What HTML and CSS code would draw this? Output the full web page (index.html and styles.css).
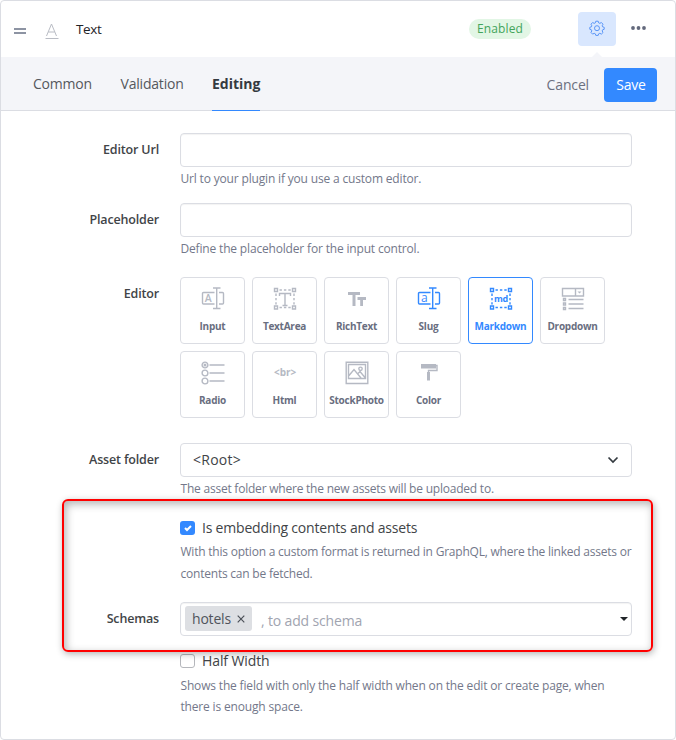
FILE: index.html
```html
<!DOCTYPE html>
<html lang="en">
<head>
<meta charset="utf-8">
<title>Field settings</title>
<link rel="stylesheet" href="styles.css">
</head>
<body>
<main class="card">
  <header class="header">
    <svg class="drag" width="12" height="6" viewBox="0 0 12 6"><path d="M0 1h12M0 5h12" stroke="#8d94a3" stroke-width="2"/></svg>
    <svg class="type" width="14" height="17" viewBox="0 0 14 17" fill="none" stroke="#b9bcc4"><path d="M1.500 13L6.500 1L11.500 13M3.300 9h6.400M.5 15.500h13"/></svg>
    <span class="title">Text</span>
    <span class="badge">Enabled</span>
    <button class="gear"><svg width="16" height="16" viewBox="0 0 16 16" fill="none" stroke="#5b96f7"><path d="M6.800 1.200h2.400l.5 1.700 1.100.5 1.600-.9 1.600 1.700-.8 1.600.4 1 1.600.5v2l-1.600.5-.4 1.100.8 1.600-1.600 1.600-1.600-.8-1.100.5-.5 1.600H6.800l-.5-1.600-1.100-.5-1.600.8L2 12.500l.8-1.600-.4-1.100L.8 9.300v-2l1.600-.5.4-1L2 4.200l1.600-1.700 1.600.9 1.100-.5z"/><circle cx="8" cy="8.200" r="2.500"/></svg></button>
    <svg class="dots" width="16" height="4" viewBox="0 0 16 4" fill="#63697c"><circle cx="2" cy="2" r="1.900"/><circle cx="7.500" cy="2" r="1.900"/><circle cx="13" cy="2" r="1.900"/></svg>
  </header>
  <nav class="tabs">
    <a class="tab common">Common</a>
    <a class="tab validation">Validation</a>
    <a class="tab active">Editing</a>
    <span class="cancel">Cancel</span>
    <button class="save">Save</button>
  </nav>
  <form class="form">
    <div class="row">
      <label class="label">Editor Url</label>
      <div><div class="input"></div><p class="hint">Url to your plugin if you use a custom editor.</p></div>
    </div>
    <div class="row">
      <label class="label">Placeholder</label>
      <div><div class="input"></div><p class="hint">Define the placeholder for the input control.</p></div>
    </div>
    <div class="row editors">
      <label class="label">Editor</label>
      <div class="tiles">
        <div class="tile"><svg class="icon" viewBox="0 0 24 24"><path d="M13.500 5.500H2.500q-1 0-1 1v9.500q0 1 1 1h11M18 5.500h3.500q1 0 1 1v9.500q0 1-1 1H18M15.700 1v20.500M12 1h7.500M12 21.500h7.500"/><text class="glyph" x="3.800" y="15" font-size="10.500">A</text></svg>Input</div>
        <div class="tile"><svg class="icon" viewBox="0 0 24 24"><path d="M1.500 1.500h3v3h-3zM19.500 1.500h3v3h-3zM1.500 19h3v3h-3zM19.500 19h3v3h-3zM6.500 9V6.500h11V9M12 6.500v12M9.500 18.500h5"/><path class="dash" d="M6.500 3h12M6.500 20.500h12M3 6.500v11M21 6.500v11"/></svg>TextArea</div>
        <div class="tile"><svg class="icon" viewBox="0 0 24 24"><path class="solid" d="M3 5h12v3h-4.500v11H7.500V8H3zM12.500 10H21v3h-3v6h-2.800v-6h-2.700z"/></svg>RichText</div>
        <div class="tile blue"><svg class="icon" viewBox="0 0 24 24"><path d="M13.500 5.500H2.500q-1 0-1 1v9.500q0 1 1 1h11M18 5.500h3.500q1 0 1 1v9.500q0 1-1 1H18M15.700 1v20.500M12 1h7.500M12 21.500h7.500"/><text class="glyph thin" x="4" y="15" font-size="12">a</text></svg>Slug</div>
        <div class="tile blue selected"><svg class="icon" viewBox="0 0 24 24"><path d="M1.500 1.500h3v3h-3zM19.500 1.500h3v3h-3zM1.500 19h3v3h-3zM19.500 19h3v3h-3z"/><path class="dash" d="M6.500 3h12M6.500 20.500h12M3 6.500v11M21 6.500v11"/><text class="glyph md" x="12" y="14.500" font-size="9">md</text></svg>Markdown</div>
        <div class="tile"><svg class="icon" viewBox="0 0 24 24"><path d="M1.500 1.500h21v7.500h-21zM14.500 1.500v7.500M7.500 12.500h15M7.500 17h15M7.500 21.500h15M2.500 11.500h2v2h-2zM2.500 16h2v2h-2zM2.500 20.500h2v2h-2z"/><path class="solid" d="M16.500 4.500h4l-2 2z"/></svg>Dropdown</div>
        <div class="tile"><svg class="icon" viewBox="0 0 24 24"><circle cx="4" cy="4" r="2.900"/><circle cx="4" cy="4" r=".8"/><circle cx="4" cy="12" r="2.900"/><circle cx="4" cy="20" r="2.900"/><path d="M8.500 4h15M8.500 12h15M8.500 20h15"/></svg>Radio</div>
        <div class="tile"><svg class="icon" viewBox="0 0 24 24"><text class="glyph md" x="12" y="15" font-size="10" textLength="22" lengthAdjust="spacing">&lt;br&gt;</text></svg>Html</div>
        <div class="tile"><svg class="icon" viewBox="0 0 24 24"><path d="M1.200 1.200h21.600v21.300H1.200zM3.500 3.500h17v14h-17zM4 14.500l5-6 7 8.500M13 12.500l2-2 5 6"/><circle cx="15.500" cy="7.800" r="1.700"/></svg>StockPhoto</div>
        <div class="tile"><svg class="icon" viewBox="0 0 24 24"><path class="solid" d="M4 3h15v4.500H4zM10 11h3v8.500h-3z"/><path d="M19 4.500h1v5h-8.500v2"/></svg>Color</div>
      </div>
    </div>
    <div class="row asset">
      <label class="label">Asset folder</label>
      <div><div class="input select"><span class="root">&lt;Root&gt;</span><svg width="12" height="8" viewBox="0 0 12 8" fill="none" stroke="#343a40" stroke-width="1.700"><path d="M1.500 1.500L6 6l4.500-4.500"/></svg></div><p class="hint tight">The asset folder where the new assets will be uploaded to.</p></div>
    </div>
    <div class="row embed">
      <div class="check"><span class="box checked"><svg width="15" height="14" viewBox="0 0 15 14" fill="none" stroke="#fff" stroke-width="2"><path d="M5 7l2 2 4-4"/></svg></span><span class="embed-name">Is embedding contents and assets</span></div>
      <p class="hint long tight">With this option a custom format is returned in GraphQL, where the linked assets or<br>contents can be fetched.</p>
    </div>
    <div class="row schemas">
      <label class="label">Schemas</label>
      <div class="input taginput"><span class="tag"><span class="hotels">hotels</span><svg width="8" height="8" viewBox="0 0 8 8" stroke="#4b5058" stroke-width="1.200"><path d="M.7.7l6.600 6.600M7.300.7L.7 7.300"/></svg></span><span class="ph">, to add schema</span><svg class="caret" width="8" height="4" viewBox="0 0 8 4"><path d="M0 0h8L4 4z" fill="#212529"/></svg></div>
    </div>
    <div class="row half">
      <div class="check"><span class="box"></span><span class="half-name">Half Width</span></div>
      <p class="hint long">Shows the field with only the half width when on the edit or create page, when<br>there is enough space.</p>
    </div>
  </form>
  <div class="highlight"></div>
</main>
</body>
</html>
```
FILE: styles.css
```css
* { box-sizing: border-box; }
body { margin: 0; background: #fff; color: #414447; font: 14px/20px "Open Sans", "Noto Sans", sans-serif; }
button { border: 0; padding: 0; font: inherit; }
p { margin: 0; }
span { white-space: nowrap; }
svg { flex: none; }
.card { position: relative; width: 676px; height: 740px; border: 1px solid #dbdde3; border-radius: 4px; }
.header { display: flex; align-items: center; height: 56px; padding: 0 29px 0 13px; }
.drag { margin-top: 4px; }
.type { margin: 4px 0 0 19px; }
.title { margin-left: 17px; color: #1f2328; font-size: 13.500px; letter-spacing: -.4px; }
.badge { margin-left: auto; width: 62px; height: 20px; border-radius: 10px; background: #e2f6e5; color: #43a45b; font-size: 12px; line-height: 20px; text-align: center; letter-spacing: .1px; }
.gear { position: relative; display: flex; align-items: center; justify-content: center; width: 38px; height: 34px; margin-left: 47px; border-radius: 4px; background: #d9e7fe; }
.gear svg { margin-top: -2px; }
.gear::after { content: ""; position: absolute; left: 14px; top: 40px; border: 5px solid transparent; border-top: 0; border-bottom-color: #f4f5f9; }
.dots { margin: -2px -1px 0 15px; }
.tabs { display: flex; height: 54px; padding: 0 18px 0 32px; background: #f4f5f9; border-bottom: 1px solid #dbdde3; }
.tab { height: 54px; line-height: 54px; color: #55585d; letter-spacing: -.2px; }
.common { width: 59px; margin-right: 28px; }
.validation { width: 64px; margin-right: 28px; padding-left: .5px; }
.active { width: 48px; color: #343a40; font-weight: 700; border-bottom: 1px solid #3389ff; letter-spacing: 0; }
.cancel { margin: 18px 15px 0 auto; color: #6c7080; letter-spacing: -.15px; }
.save { width: 53px; height: 34px; margin-top: 11px; padding-left: 1px; border-radius: 4px; background: #3389ff; color: #fff; letter-spacing: -.2px; }
.form { padding: 22px 43px 0 20px; }
.row { display: grid; grid-template-columns: 138px 452px; column-gap: 21px; height: 70px; }
.label { padding-top: 7px; text-align: right; font-size: 12.500px; font-weight: 600; white-space: nowrap; letter-spacing: -.16px; }
.input { display: flex; align-items: center; height: 34px; border: 1px solid #dbdde3; border-radius: 4px; box-shadow: inset 0 1px 1px #0000000d; }
.hint { padding: 2px 0 0 .5px; color: #73788a; font-size: 12px; line-height: 20px; white-space: nowrap; letter-spacing: -.17px; }
.tight { letter-spacing: -.22px; }
.editors { height: 170px; padding-top: 4px; }
.tiles { display: grid; grid-template-columns: repeat(6, 65px); grid-auto-rows: 67px; gap: 7px; align-content: start; }
.tile { display: flex; flex-direction: column; align-items: center; padding-top: 9px; border: 1px solid #dbdde3; border-radius: 4px; color: #696e80; font-size: 10px; font-weight: 700; line-height: 15px; letter-spacing: -.25px; white-space: nowrap; }
.icon { width: 24px; height: 24px; margin-bottom: 8px; fill: none; stroke: #b5b9c3; stroke-width: 1.400; }
.dash { stroke-dasharray: 2.400 2; }
.solid, .glyph { fill: #b5b9c3; stroke: none; }
.glyph { font-weight: 600; }
.thin { font-weight: 400; }
.md { text-anchor: middle; font-weight: 700; }
.blue .icon { stroke: #3389ff; }
.blue .glyph { fill: #3389ff; }
.selected { border-color: #3389ff; color: #3389ff; }
.select { justify-content: space-between; padding: 0 12px; box-shadow: none; }
.root { letter-spacing: .25px; }
.embed, .half { display: block; padding-left: 159px; }
.embed { height: 89px; padding-top: 5px; }
.check { display: flex; align-items: center; height: 20px; gap: 7px; }
.embed-name { letter-spacing: -.2px; }
.half-name { letter-spacing: -.1px; }
.box { width: 15px; height: 14px; border: 1px solid #b5b7bc; border-radius: 3px; }
.checked { display: flex; border: 0; background: #3389ff; }
.long { padding-top: 3px; line-height: 22px; }
.schemas { height: 46px; }
.taginput { padding: 0 3px 0 4px; }
.tag { display: flex; align-items: center; gap: 6px; width: 67px; height: 25px; margin-top: -1px; padding-left: 7px; border-radius: 3px; background: #dddfe3; color: #50545b; }
.hotels { width: 39px; letter-spacing: -.2px; }
.ph { margin: 3px 0 0 9px; color: #a1a4b0; letter-spacing: -.15px; }
.caret { margin-left: auto; }
.half { height: 75px; padding-top: 3px; }
.half .hint { padding-top: 4px; line-height: 21px; }
.highlight { position: absolute; left: 61px; top: 498px; width: 591px; height: 153px; border: 2px solid #f00; border-radius: 6px; box-shadow: 1px 2px 7px #0000004d, inset 2px 3px 8px #0000004d; }
```
